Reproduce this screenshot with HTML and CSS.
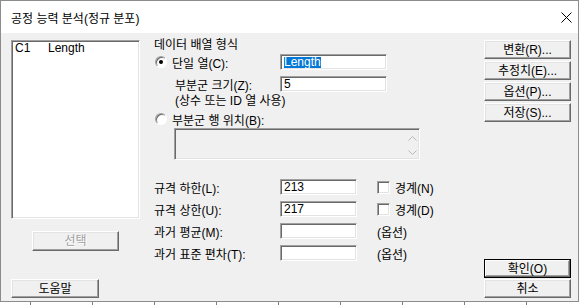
FILE: index.html
```html
<!DOCTYPE html>
<html>
<head>
	<meta charset="utf-8">
	<title>공정 능력 분석(정규 분포)</title>
	<link rel="stylesheet" href="styles.css">
</head>
<body>
	<div class="screen">
		<div class="window">
			<div class="titlebar">
				<span class="title">공정 능력 분석(정규 분포)</span>
				<svg class="close" width="11" height="11" viewBox="0 0 11 11">
					<path d="M0.5 0.5 L10.5 10.5 M10.5 0.5 L0.5 10.5" stroke="#000" stroke-width="1" fill="none"/>
				</svg>
			</div>
			<div class="client">
				<div class="col-left">
					<div class="listbox">
						<div class="list-item"><span class="col-id">C1</span><span>Length</span></div>
					</div>
					<button type="button" class="btn btn-select" disabled>선택</button>
					<button type="button" class="btn btn-help">도움말</button>
				</div>

				<div class="col-main">
					<div class="group-title">데이터 배열 형식</div>
					<div class="row row-first">
						<span class="radio checked"></span>
						<span class="row-label">단일 열(C):</span>
						<span class="field"><span class="sel">Length</span></span>
					</div>
					<div class="row row-sub">
						<span class="sub-label">부분군 크기(Z):</span>
						<span class="field">5</span>
					</div>
					<div class="note">(상수 또는 ID 열 사용)</div>
					<div class="row row-second">
						<span class="radio"></span>
						<span>부분군 행 위치(B):</span>
					</div>
					<div class="multi">
						<div class="scroll">
							<svg width="9" height="5" viewBox="0 0 9 5"><path d="M0.5 4.5 L4.5 0.5 L8.5 4.5" stroke="#b9b9b9" fill="none"/></svg>
							<svg width="9" height="5" viewBox="0 0 9 5"><path d="M0.5 0.5 L4.5 4.5 L8.5 0.5" stroke="#b9b9b9" fill="none"/></svg>
						</div>
					</div>

					<div class="spec">
						<div class="spec-row">
							<span class="spec-label">규격 하한(L):</span>
							<span class="field field-short">213</span>
							<span class="check"></span>
							<span class="check-label">경계(N)</span>
						</div>
						<div class="spec-row">
							<span class="spec-label">규격 상한(U):</span>
							<span class="field field-short">217</span>
							<span class="check"></span>
							<span class="check-label">경계(D)</span>
						</div>
						<div class="spec-row">
							<span class="spec-label">과거 평균(M):</span>
							<span class="field field-short"></span>
							<span class="optional">(옵션)</span>
						</div>
						<div class="spec-row">
							<span class="spec-label">과거 표준 편차(T):</span>
							<span class="field field-short"></span>
							<span class="optional">(옵션)</span>
						</div>
					</div>
				</div>

				<div class="col-right">
					<button type="button" class="btn btn-side">변환(R)...</button>
					<button type="button" class="btn btn-side">추정치(E)...</button>
					<button type="button" class="btn btn-side">옵션(P)...</button>
					<button type="button" class="btn btn-side">저장(S)...</button>
					<button type="button" class="btn btn-side btn-default">확인(O)</button>
					<button type="button" class="btn btn-side btn-cancel">취소</button>
				</div>
			</div>
		</div>
		<div class="ticks"></div>
	</div>
</body>
</html>
```

FILE: styles.css
```css
body {
	margin: 0;
	background-color: #fff;
	font-family: "Liberation Sans", "Noto Sans CJK KR", sans-serif;
	font-size: 12px;
	color: #000;
	white-space: nowrap;
}
.screen {
	width: 582px;
	height: 305px;
	display: flex;
	flex-direction: column;
}
.window {
	width: 579px;
	height: 302px;
	box-sizing: border-box;
	border: 1px solid #8c8c8c;
	background-color: #f0f0f0;
	display: flex;
	flex-direction: column;
}
.titlebar {
	height: 32px;
	flex: none;
	background-color: #fff;
	display: flex;
	align-items: center;
	padding: 0 6px 0 10px;
}
.close {
	margin-left: auto;
}
.ticks {
	height: 3px;
	background: repeating-linear-gradient(to right, transparent 0 30px, #808080 30px 31px, transparent 31px 62px);
}
.client {
	flex: 1;
	display: flex;
	padding: 7px 7px 3px 10px;
}

/* left column */
.col-left {
	width: 129px;
	flex: none;
	display: flex;
	flex-direction: column;
}
.listbox {
	height: 179px;
	box-sizing: border-box;
	background-color: #fff;
	border: 1px solid;
	border-color: #a0a0a0 #fff #fff #a0a0a0;
	box-shadow: inset 1px 1px #696969, inset -1px -1px #e3e3e3;
	padding: 1px 3px;
}
.list-item {
	display: flex;
	line-height: 13px;
}
.col-id {
	width: 33px;
}

/* buttons */
.btn {
	font: inherit;
	color: #000;
	background-color: #f0f0f0;
	box-sizing: border-box;
	border: 1px solid;
	border-color: #fff #696969 #696969 #fff;
	box-shadow: inset -1px -1px #a0a0a0, inset 1px 1px #e3e3e3;
	padding: 0;
	line-height: 14px;
}
.btn-select {
	width: 87px;
	height: 20px;
	margin-top: 12px;
	align-self: center;
	color: #a0a0a0;
	text-shadow: 1px 1px #fff;
}
.btn-help {
	width: 88px;
	height: 19px;
	margin-top: auto;
}
.col-right {
	width: 87px;
	flex: none;
	margin-left: auto;
	display: flex;
	flex-direction: column;
}
.btn-side {
	height: 19px;
	margin-bottom: 2px;
}
.btn-default {
	margin-top: auto;
	margin-bottom: 1px;
	border-color: #000;
	box-shadow: inset -1px -1px #696969, inset 1px 1px #fff, inset -2px -2px #a0a0a0;
}
.btn-cancel {
	margin-bottom: 0;
}

/* main column */
.col-main {
	width: 266px;
	flex: none;
	margin-left: 14px;
	display: flex;
	flex-direction: column;
}
.group-title {
	height: 11px;
	line-height: 11px;
}
.row {
	display: flex;
	align-items: center;
	height: 16px;
}
.row > *,
.spec-row > * {
	flex: none;
}
.row-first {
	margin-top: 3px;
}
.row-sub {
	margin-top: 6px;
}
.row-second {
	margin-top: 5px;
	height: 14px;
}
.row-label {
	width: 108px;
}
.sub-label {
	width: 105px;
	padding-left: 21px;
}
.note {
	margin-top: 3px;
	height: 12px;
	line-height: 12px;
	padding-left: 21px;
}
.radio {
	width: 12px;
	height: 12px;
	box-sizing: border-box;
	margin: 0 5px 0 1px;
	border-radius: 50%;
	border: 1px solid;
	border-color: #a0a0a0 #fff #fff #a0a0a0;
	box-shadow: inset 1px 1px #696969;
	background-color: #fff;
	display: flex;
	align-items: center;
	justify-content: center;
}
.radio.checked::after {
	content: "";
	width: 4px;
	height: 4px;
	border-radius: 50%;
	background-color: #000;
}
.field {
	width: 107px;
	height: 16px;
	box-sizing: border-box;
	background-color: #fff;
	border: 1px solid;
	border-color: #a0a0a0 #fff #fff #a0a0a0;
	box-shadow: inset 1px 1px #696969, inset -1px -1px #e3e3e3;
	padding-left: 3px;
	display: flex;
	align-items: center;
	line-height: 12px;
}
.field-short {
	width: 77px;
}
.sel {
	background-color: #0078d7;
	color: #fff;
	line-height: 11px;
}
.multi {
	width: 246px;
	height: 32px;
	box-sizing: border-box;
	margin: 2px 0 0 20px;
	border: 1px solid;
	border-color: #a0a0a0 #fff #fff #a0a0a0;
	box-shadow: inset 1px 1px #696969, inset -1px -1px #e3e3e3;
	display: flex;
	justify-content: flex-end;
}
.scroll {
	width: 12px;
	margin-right: 1px;
	padding-top: 7px;
	display: flex;
	flex-direction: column;
	align-items: center;
	gap: 9px;
}
.scroll svg {
	display: block;
}
.spec {
	margin-top: 19px;
	display: flex;
	flex-direction: column;
	gap: 6px;
}
.spec-row {
	display: flex;
	align-items: center;
	height: 16px;
}
.spec-label {
	width: 126px;
}
.check {
	width: 13px;
	height: 13px;
	box-sizing: border-box;
	margin-left: 20px;
	background-color: #fff;
	border: 1px solid;
	border-color: #a0a0a0 #fff #fff #a0a0a0;
	box-shadow: inset 1px 1px #696969, inset -1px -1px #e3e3e3;
}
.check-label {
	margin-left: 5px;
}
.optional {
	margin-left: 20px;
}
```
